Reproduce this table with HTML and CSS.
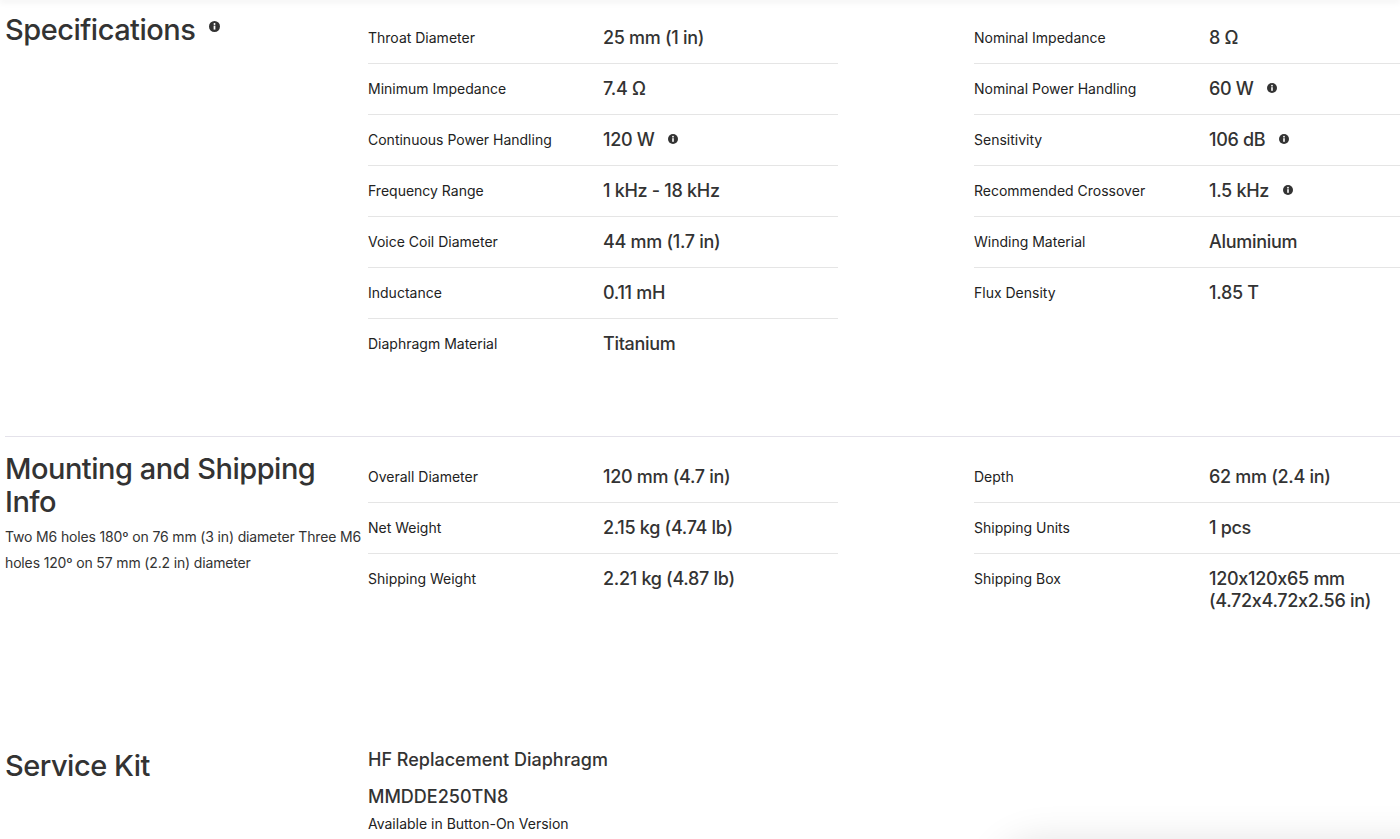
FILE: index.html
```html
<!DOCTYPE html>
<html lang="en">
<head>
<meta charset="utf-8">
<title>Specifications</title>
<link rel="stylesheet" href="styles.css">
</head>
<body>
<div class="topshade"></div>
<main class="page">
  <section class="spec-section first">
    <div class="side">
      <h2 class="heading">Specifications <span class="info sup" aria-hidden="true"><svg viewBox="0 0 10 10"><circle cx="5" cy="5" r="5" fill="#333"/><rect x="4.2" y="4.2" width="1.6" height="3.6" fill="#fff"/><circle cx="5" cy="2.7" r="0.9" fill="#fff"/></svg></span></h2>
    </div>
    <div class="table">
      <div class="row"><span class="label">Throat Diameter</span><span class="value">25 mm (1 in)</span></div>
      <div class="row"><span class="label">Minimum Impedance</span><span class="value">7.4 Ω</span></div>
      <div class="row"><span class="label">Continuous Power Handling</span><span class="value">120 W <span class="info"><svg viewBox="0 0 10 10"><circle cx="5" cy="5" r="5" fill="#333"/><rect x="4.2" y="4.2" width="1.6" height="3.6" fill="#fff"/><circle cx="5" cy="2.7" r="0.9" fill="#fff"/></svg></span></span></div>
      <div class="row"><span class="label">Frequency Range</span><span class="value">1 kHz - 18 kHz</span></div>
      <div class="row"><span class="label">Voice Coil Diameter</span><span class="value">44 mm (1.7 in)</span></div>
      <div class="row"><span class="label">Inductance</span><span class="value">0.11 mH</span></div>
      <div class="row"><span class="label">Diaphragm Material</span><span class="value">Titanium</span></div>
    </div>
    <div class="table wide">
      <div class="row"><span class="label">Nominal Impedance</span><span class="value">8 Ω</span></div>
      <div class="row"><span class="label">Nominal Power Handling</span><span class="value">60 W <span class="info"><svg viewBox="0 0 10 10"><circle cx="5" cy="5" r="5" fill="#333"/><rect x="4.2" y="4.2" width="1.6" height="3.6" fill="#fff"/><circle cx="5" cy="2.7" r="0.9" fill="#fff"/></svg></span></span></div>
      <div class="row"><span class="label">Sensitivity</span><span class="value">106 dB <span class="info"><svg viewBox="0 0 10 10"><circle cx="5" cy="5" r="5" fill="#333"/><rect x="4.2" y="4.2" width="1.6" height="3.6" fill="#fff"/><circle cx="5" cy="2.7" r="0.9" fill="#fff"/></svg></span></span></div>
      <div class="row"><span class="label">Recommended Crossover</span><span class="value">1.5 kHz <span class="info"><svg viewBox="0 0 10 10"><circle cx="5" cy="5" r="5" fill="#333"/><rect x="4.2" y="4.2" width="1.6" height="3.6" fill="#fff"/><circle cx="5" cy="2.7" r="0.9" fill="#fff"/></svg></span></span></div>
      <div class="row"><span class="label">Winding Material</span><span class="value">Aluminium</span></div>
      <div class="row last"><span class="label">Flux Density</span><span class="value">1.85 T</span></div>
    </div>
  </section>

  <section class="spec-section second">
    <div class="side">
      <h2 class="heading">Mounting and Shipping Info</h2>
      <p class="desc">Two M6 holes 180º on 76 mm (3 in) diameter Three M6 holes 120º on 57 mm (2.2 in) diameter</p>
    </div>
    <div class="table">
      <div class="row"><span class="label">Overall Diameter</span><span class="value">120 mm (4.7 in)</span></div>
      <div class="row"><span class="label">Net Weight</span><span class="value">2.15 kg (4.74 lb)</span></div>
      <div class="row"><span class="label">Shipping Weight</span><span class="value">2.21 kg (4.87 lb)</span></div>
    </div>
    <div class="table wide">
      <div class="row"><span class="label">Depth</span><span class="value">62 mm (2.4 in)</span></div>
      <div class="row"><span class="label">Shipping Units</span><span class="value">1 pcs</span></div>
      <div class="row"><span class="label">Shipping Box</span><span class="value">120x120x65 mm<br>(4.72x4.72x2.56 in)</span></div>
    </div>
  </section>

  <section class="spec-section third">
    <div class="side">
      <h2 class="heading kit">Service Kit</h2>
    </div>
    <div class="kit-info">
      <div class="kit-name">HF Replacement Diaphragm</div>
      <div class="kit-code">MMDDE250TN8</div>
      <div class="kit-note">Available in Button-On Version</div>
    </div>
  </section>
</main>
<div class="floatbar"></div>
</body>
</html>
```

FILE: styles.css
```css
html, body {
  margin: 0;
  padding: 0;
  background: #fff;
  overflow: hidden;
}

body {
  font-family: Inter, "Noto Sans", "Liberation Sans", sans-serif;
  color: #2b2b2b;
  width: 1400px;
  height: 839px;
}

.topshade {
  height: 0;
  box-shadow: 0 0 7px 1px rgba(0, 0, 0, 0.14);
  position: relative;
  z-index: 2;
}

.page {
  padding-left: 5px;
}

.spec-section {
  display: grid;
  grid-template-columns: 363px 470px 562px;
  column-gap: 0;
  align-items: start;
}

.table.wide {
  margin-left: 136px;
}

.spec-section.first {
  padding-top: 13px;
  padding-bottom: 67px;
  border-bottom: 1px solid #e4e2ea;
}

.spec-section.second {
  padding-top: 15px;
}

.spec-section.third {
  padding-top: 122px;
}

.heading {
  margin: 0;
  font-size: 29px;
  line-height: 33px;
  font-weight: 500;
  color: #333;
  letter-spacing: -0.5px;
}

.heading.kit {
  margin-top: 1px;
}

.desc {
  margin: 6px 0 0;
  font-size: 14px;
  line-height: 26px;
  color: #333;
  letter-spacing: -0.15px;
}

.table {
  display: flex;
  flex-direction: column;
}

.row {
  display: flex;
  align-items: flex-start;
  padding: 14px 0;
  border-bottom: 1px solid #e5e5e5;
}

.row:last-child {
  border-bottom: none;
}

.label {
  flex: 0 0 235px;
  font-size: 14px;
  line-height: 22px;
  color: #222;
}

.value {
  display: block;
  font-size: 18px;
  line-height: 22px;
  font-weight: 500;
  color: #333;
  letter-spacing: -0.3px;
}

.info {
  display: inline-block;
  width: 10px;
  height: 10px;
  margin-left: 9px;
  vertical-align: 2px;
}

.info svg {
  display: block;
  width: 10px;
  height: 10px;
}

.info.sup {
  width: 11px;
  height: 11px;
  margin-left: 6px;
  vertical-align: 8px;
}

.info.sup svg {
  width: 11px;
  height: 11px;
}

.kit-info {
  grid-column: 2 / 4;
  display: flex;
  flex-direction: column;
}

.kit-name {
  font-size: 18px;
  line-height: 24px;
  font-weight: 500;
  color: #333;
}

.kit-code {
  font-size: 18px;
  line-height: 24px;
  font-weight: 500;
  color: #333;
  margin-top: 13px;
}

.kit-note {
  font-size: 14px;
  line-height: 20px;
  color: #222;
  margin-top: 5px;
}

.floatbar {
  position: fixed;
  left: 1000px;
  top: 846px;
  width: 460px;
  height: 60px;
  border-radius: 40px 0 0 0;
  background: #fff;
  box-shadow: 0 0 40px 4px rgba(0, 0, 0, 0.12);
}
```
